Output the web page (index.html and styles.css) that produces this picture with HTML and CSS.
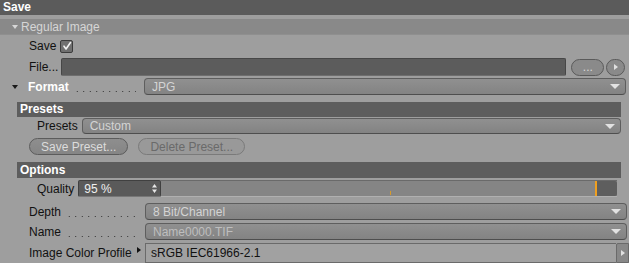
FILE: index.html
```html
<!DOCTYPE html>
<html lang="en">
<head>
  <meta charset="UTF-8" />
  <meta name="viewport" content="width=device-width, initial-scale=1.0" />
  <title>Save</title>
  <link rel="stylesheet" href="styles.css">
</head>
<body>
  <div class="titulo">Save</div>

  <div class="secao"><span class="seta-baixo clara"></span>Regular Image</div>

  <div class="linha linha-save">
    <span class="rotulo-curto">Save</span>
    <span class="checkbox">
      <svg width="10" height="10" viewBox="0 0 10 10"><path d="M2 5.2 L4 8 L8.5 1.5" fill="none" stroke="#f2f2f2" stroke-width="1.6" stroke-linecap="round" stroke-linejoin="round"/></svg>
    </span>
  </div>

  <div class="linha linha-file">
    <span class="rotulo-curto">File...</span>
    <div class="campo-escuro"></div>
    <button class="pilula">...</button>
    <button class="redondo"><span class="seta-dir"></span></button>
  </div>

  <div class="linha linha-format">
    <span class="seta-baixo escura seta-format"></span>
    <span class="rotulo forte">Format<span class="pontos"></span></span>
    <div class="dropdown"><span>JPG</span><span class="seta-drop"></span></div>
  </div>

  <div class="grupo">
    <div class="cabecalho">Presets</div>
    <div class="linha linha-presets">
      <span class="rotulo-grupo">Presets</span>
      <div class="dropdown dropdown-presets"><span>Custom</span><span class="seta-drop"></span></div>
    </div>
    <div class="linha linha-botoes">
      <button class="botao">Save Preset...</button>
      <button class="botao desativado">Delete Preset...</button>
    </div>
    <div class="cabecalho cabecalho-options">Options</div>
    <div class="linha linha-quality">
      <span class="rotulo-grupo">Quality</span>
      <div class="campo-numero">
        <span>95 %</span>
        <svg width="5" height="9" viewBox="0 0 5 9"><path d="M2.5 0 L5 3.5 L0 3.5 Z M2.5 9 L5 5.5 L0 5.5 Z" fill="#e6e6e6"/></svg>
      </div>
      <div class="slider">
        <span class="marca-meio"></span>
        <span class="slider-fim"></span>
      </div>
    </div>
  </div>

  <div class="linha linha-depth">
    <span class="rotulo">Depth<span class="pontos"></span></span>
    <div class="dropdown"><span>8 Bit/Channel</span><span class="seta-drop"></span></div>
  </div>

  <div class="linha linha-name">
    <span class="rotulo">Name<span class="pontos"></span></span>
    <div class="dropdown"><span class="apagado">Name0000.TIF</span><span class="seta-drop"></span></div>
  </div>

  <div class="linha linha-perfil">
    <span class="rotulo">Image Color Profile<span class="seta-dir escura-dir"></span></span>
    <div class="campo-claro">sRGB IEC61966-2.1</div>
    <div class="botao-lateral"><span class="seta-dir"></span></div>
  </div>
</body>
</html>
```

FILE: styles.css
```css
* {
  box-sizing: border-box;
  margin: 0;
  padding: 0;
}
body {
  font-family: 'Liberation Sans', Arial, sans-serif;
  font-size: 12px;
  background: #9e9e9e;
  color: #111;
  width: 629px;
  height: 263px;
  overflow: hidden;
}
.titulo {
  height: 15px;
  line-height: 15px;
  background: #5b5b5b;
  color: #fff;
  font-weight: bold;
  padding-left: 3px;
}
.secao {
  margin-top: 4px;
  height: 16px;
  line-height: 16px;
  background: #898989;
  color: #d6d6d6;
  padding-left: 12px;
  display: flex;
  align-items: center;
  border-bottom: 1px solid #8f8f8f;
}
.seta-baixo {
  width: 0;
  height: 0;
  border-left: 3.5px solid transparent;
  border-right: 3.5px solid transparent;
  border-top: 4px solid #d6d6d6;
  margin-right: 3px;
}
.seta-baixo.escura {
  border-top-color: #1a1a1a;
}
.seta-dir {
  width: 0;
  height: 0;
  border-top: 3px solid transparent;
  border-bottom: 3px solid transparent;
  border-left: 4px solid #e0e0e0;
}
.linha {
  display: flex;
  align-items: center;
  padding-left: 29px;
}
.linha-save {
  margin-top: 3px;
  height: 16px;
}
.rotulo-curto {
  margin-right: 4px;
}
.checkbox {
  width: 13px;
  height: 13px;
  border: 1px solid #3c3c3c;
  border-radius: 2px;
  background: #707070;
  display: flex;
  align-items: center;
  justify-content: center;
}
.linha-file {
  margin-top: 4px;
  height: 18px;
}
.campo-escuro {
  width: 505px;
  height: 18px;
  background: #5c5c5c;
  border: 1px solid #474747;
  border-bottom-color: #6e6e6e;
  border-radius: 2px;
  margin-left: -1px;
}
button {
  font-family: inherit;
  font-size: 12px;
  cursor: pointer;
}
.pilula {
  width: 33px;
  height: 17px;
  margin-left: 5px;
  border-radius: 9px;
  border: 1px solid #5a5a5a;
  background: #8a8a8a;
  color: #d8d8d8;
  line-height: 12px;
}
.redondo {
  width: 19px;
  height: 17px;
  margin-left: 2px;
  border-radius: 9px;
  border: 1px solid #5a5a5a;
  background: #8a8a8a;
  display: flex;
  align-items: center;
  justify-content: center;
}
.linha-format {
  margin-top: 2px;
  height: 17px;
  padding-left: 12px;
}
.seta-format {
  margin-right: 10px;
}
.rotulo {
  width: 116px;
  display: flex;
  align-items: center;
  white-space: nowrap;
}
.forte {
  font-weight: bold;
  color: #fff;
}
.pontos {
  flex: 1;
  height: 12px;
  margin: 0 8px 0 5px;
  background: radial-gradient(circle, #2a2a2a 0.6px, transparent 0.9px) repeat-x;
  background-size: 6.5px 3px;
  background-position: left bottom;
}
.dropdown {
  width: 482px;
  height: 17px;
  border: 1px solid #5e5e5e;
  border-bottom-color: #4e4e4e;
  border-radius: 4px;
  background: linear-gradient(#909090, #838383);
  color: #d4d4d4;
  display: flex;
  align-items: center;
  justify-content: space-between;
  padding: 0 5px 0 7px;
}
.seta-drop {
  width: 0;
  height: 0;
  border-left: 5px solid transparent;
  border-right: 5px solid transparent;
  border-top: 5px solid #e2e2e2;
}
.apagado {
  color: #bebebe;
}
.grupo {
  margin: 7px 8px 0 17px;
  padding-bottom: 3px;
}
.cabecalho {
  height: 15px;
  line-height: 15px;
  background: #5d5d5d;
  color: #fff;
  font-weight: bold;
  padding-left: 3px;
}
.cabecalho-options {
  margin-top: 7px;
  height: 16px;
  line-height: 16px;
}
.linha-presets {
  margin-top: 1px;
  height: 16px;
  padding-left: 20px;
}
.rotulo-grupo {
  margin-right: 4px;
}
.dropdown-presets {
  width: 539px;
  height: 16px;
  padding-left: 7px;
}
.linha-botoes {
  margin-top: 4px;
  height: 17px;
  padding-left: 12px;
}
.botao {
  height: 17px;
  border-radius: 9px;
  border: 1px solid #5c5c5c;
  background: linear-gradient(#8e8e8e, #858585);
  color: #dcdcdc;
  padding: 0 11px;
  margin-right: 10px;
}
.botao.desativado {
  border-color: #7a7a7a;
  color: #6a6a6a;
  background: #999;
}
.linha-quality {
  margin-top: 2px;
  height: 17px;
  padding-left: 20px;
}
.campo-numero {
  width: 83px;
  height: 17px;
  background: #5a5a5a;
  border: 1px solid #404040;
  border-bottom-color: #777;
  border-radius: 2px;
  color: #f0f0f0;
  display: flex;
  align-items: center;
  justify-content: space-between;
  padding: 0 3px 0 5px;
}
.slider {
  position: relative;
  width: 456px;
  height: 17px;
  background: #858585;
  border-top: 1px solid #6a6a6a;
  border-bottom: 1px solid #b0b0b0;
  display: flex;
  justify-content: flex-end;
}
.slider-fim {
  width: 22px;
  background: #5e5e5e;
  border-left: 2px solid #f0a020;
  border-radius: 0 2px 2px 0;
}
.marca-meio {
  position: absolute;
  left: 229px;
  bottom: 1px;
  width: 1px;
  height: 4px;
  background: #d89a2a;
}
.linha-depth {
  margin-top: 3px;
  height: 17px;
}
.linha-name {
  margin-top: 3px;
  height: 17px;
}
.linha-perfil {
  margin-top: 3px;
  height: 20px;
}
.escura-dir {
  border-left-color: #111;
  margin-left: 5px;
  margin-top: -6px;
}
.campo-claro {
  width: 471px;
  height: 20px;
  border: 1px solid #6a6a6a;
  border-right: none;
  background: #a1a1a1;
  padding-left: 5px;
  line-height: 18px;
  color: #111;
}
.botao-lateral {
  width: 13px;
  height: 20px;
  border: 1px solid #6a6a6a;
  border-radius: 2px 0 0 0;
  background: #888;
  display: flex;
  align-items: center;
  justify-content: center;
}
```
